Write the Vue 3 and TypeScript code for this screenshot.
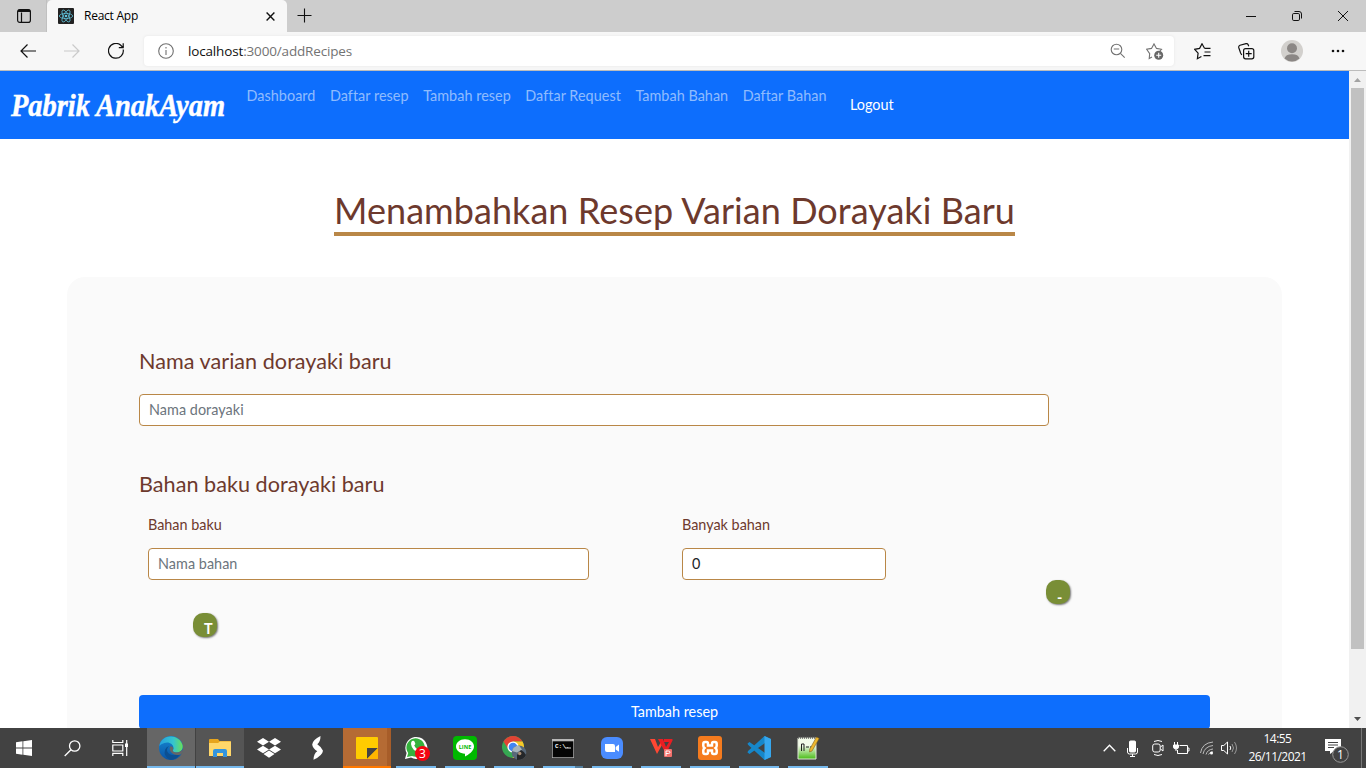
<script setup lang="ts">
import { ref } from 'vue'

const navLinks: string[] = ['Dashboard', 'Daftar resep', 'Tambah resep', 'Daftar Request', 'Tambah Bahan', 'Daftar Bahan']
const recipeName = ref('')
const ingredientName = ref('')
const amount = ref('0')
</script>

<template>
  <div class="screen">
    <header class="tabs">
      <div class="tab-actions">
        <svg width="16" height="16" viewBox="0 0 16 16" fill="none" stroke="#111" stroke-width="1.2">
          <rect x="1.6" y="1.6" width="12.8" height="12.8" rx="2.2" /><path d="M2 3.2h12M5.5 4.5v9.7" /><path d="M2 2.8h12" stroke-width="2.2" />
        </svg>
      </div>
      <div class="tab">
        <svg class="favicon" width="16" height="16" viewBox="0 0 16 16">
          <rect width="16" height="16" rx="1" fill="#222" />
          <g fill="none" stroke="#61c5de" stroke-width=".75"><ellipse cx="8" cy="8" rx="6.7" ry="2.6" /><ellipse cx="8" cy="8" rx="6.7" ry="2.6" transform="rotate(60 8 8)" /><ellipse cx="8" cy="8" rx="6.7" ry="2.6" transform="rotate(120 8 8)" /></g>
          <circle cx="8" cy="8" r="1.3" fill="#61c5de" />
        </svg>
        <span class="tab-title">React App</span>
        <svg width="9" height="9" viewBox="0 0 9 9" stroke="#111" stroke-width="1.4"><path d="M.6.6l7.8 7.8M8.400.6L.6 8.400" /></svg>
      </div>
      <svg class="new-tab" width="15" height="15" viewBox="0 0 15 15" stroke="#111" stroke-width="1.1"><path d="M7.500.5v14M.5 7.500h14" /></svg>
      <div class="window-controls">
        <svg width="10" height="10" viewBox="0 0 10 10" stroke="#111"><path d="M0 5.500h10" /></svg>
        <svg width="10" height="10" viewBox="0 0 10 10" fill="none" stroke="#111"><rect x=".5" y="2.500" width="7" height="7" rx="1.300" /><path d="M2.500.5h4.500a2.500 2.500 0 0 1 2.500 2.500v4.500" /></svg>
        <svg width="10" height="10" viewBox="0 0 10 10" stroke="#111"><path d="M0 0l10 10M10 0L0 10" /></svg>
      </div>
    </header>

    <div class="toolbar">
      <svg width="16" height="14" viewBox="0 0 16 14" fill="none" stroke="#111" stroke-width="1.200"><path d="M16 7H1M7.500.5L1 7l6.500 6.500" /></svg>
      <svg class="forward" width="16" height="14" viewBox="0 0 16 14" fill="none" stroke="#cacaca" stroke-width="1.200"><path d="M0 7h15M8.500.5L15 7l-6.500 6.500" /></svg>
      <svg class="reload" width="16" height="16" viewBox="0 0 16 16" fill="none" stroke="#111" stroke-width="1.200"><path d="M15.200 6.500A7.400 7.400 0 1 1 12.500 2L15 4.500M15.200.3v4.400h-4.400" /></svg>
      <div class="address">
        <svg width="16" height="16" viewBox="0 0 16 16" fill="none" stroke="#707070" stroke-width="1.100"><circle cx="8" cy="8" r="7.300" /><path d="M8 7v5M8 4v1.500" /></svg>
        <span class="url">localhost<span class="url-path">:3000/addRecipes</span></span>
        <svg class="zoom" width="16" height="16" viewBox="0 0 16 16" fill="none" stroke="#737373" stroke-width="1.100"><circle cx="6.500" cy="6.500" r="5.300" /><path d="M10.400 10.400l4.300 4.300M3.800 6h5.400" /></svg>
        <svg width="18" height="17" viewBox="0 0 18 17" fill="none" stroke="#737373" stroke-width="1.100"><path d="M6 14l-2.800 1.600.5-5L.7 6.300l4.800-.9L8 .9l2.500 4.500 5 .9-2 2.200" /><circle cx="12.700" cy="12.300" r="4.500" fill="#686868" stroke="none" /><path d="M12.700 9.800v5M10.200 12.300h5" stroke="#fff" /></svg>
      </div>
      <svg class="favorites" width="17" height="17" viewBox="0 0 17 17" fill="none" stroke="#111" stroke-width="1.200"><path d="M10.500 5.300L8 .8 5.600 5.400l-4.900.9 3.400 3.900-.7 5.500 4-2.200M10.500 5.300h6M10.500 9h6M9.500 12.600h7" /></svg>
      <svg class="collections" width="17" height="17" viewBox="0 0 17 17" fill="none" stroke="#111" stroke-width="1.200"><path d="M3.800 12L2.600 10 .8 4.700Q.3 3 2 2.200l6-1.600Q9.500.3 10.200 1.700l.5 1.600" /><rect x="5.600" y="5.600" width="10.200" height="10.200" rx="2" /><path d="M10.700 7.700v6M7.700 10.700h6" /></svg>
      <svg class="avatar" width="22" height="22" viewBox="0 0 22 22"><circle cx="11" cy="11" r="11" fill="#d2d0cd" /><circle cx="11" cy="8.300" r="5" fill="#8b8785" /><path d="M3.500 18.500q1-4.300 7.500-4.300t7.500 4.300A11 11 0 0 1 3.500 18.500" fill="#8b8785" /></svg>
      <svg width="14" height="4" viewBox="0 0 14 4" fill="#111"><circle cx="2" cy="2" r="1.300" /><circle cx="7" cy="2" r="1.300" /><circle cx="12" cy="2" r="1.300" /></svg>
    </div>

    <div class="viewport">
      <div class="page">
        <nav class="navbar">
          <svg class="brand" width="220" height="44" viewBox="0 0 220 44"><text x="2" y="32" textLength="214" lengthAdjust="spacingAndGlyphs">Pabrik AnakAyam</text></svg>
          <a v-for="link in navLinks" :key="link" class="nav-link">{{ link }}</a>
          <button class="logout">Logout</button>
        </nav>
        <h1><span>Menambahkan Resep Varian Dorayaki Baru</span></h1>
        <form class="card" @submit.prevent>
          <h4>Nama varian dorayaki baru</h4>
          <input v-model="recipeName" class="name-input" placeholder="Nama dorayaki" />
          <h4 class="second">Bahan baku dorayaki baru</h4>
          <div class="row">
            <label class="ingredient">Bahan baku<input v-model="ingredientName" placeholder="Nama bahan" /></label>
            <label class="amount">Banyak bahan<input v-model="amount" /></label>
            <button type="button" class="round remove">-</button>
          </div>
          <button type="button" class="round add">T</button>
          <button class="submit">Tambah resep</button>
        </form>
      </div>
      <div class="scrollbar">
        <svg width="17" height="17" viewBox="0 0 17 17"><path d="M5 11l3.500-4 3.500 4z" fill="#a3a3a3" /></svg>
        <div class="thumb"></div>
        <svg width="17" height="17" viewBox="0 0 17 17"><path d="M5 6l3.500 4L12 6z" fill="#505050" /></svg>
      </div>
    </div>

    <footer class="taskbar">
      <div class="sys"><svg width="16" height="16" viewBox="0 0 16 16" fill="#fff"><path d="M0 2.200L6.500 1.300v6.300H0zM7.300 1.200L16 0v7.600H7.300zM0 8.400h6.500v6.300L0 13.800zM7.300 8.400H16V16l-8.700-1.200z" /></svg></div>
      <div class="sys"><svg width="17" height="17" viewBox="0 0 17 17" fill="none" stroke="#fff" stroke-width="1.300"><circle cx="10.700" cy="6" r="5.200" /><path d="M7 9.700L.7 16" /></svg></div>
      <div class="sys"><svg width="17" height="16" viewBox="0 0 17 16" fill="none" stroke="#fff" stroke-width="1.200"><path d="M.8 0v2.500h10V0M.8 16v-2.700h10V16M.8 5h10v6h-10zM14.700 0v16" /><path d="M13 3.500h3v3.500h-3z" fill="#fff" stroke="none" /></svg></div>
      <div class="app edge"><svg width="24" height="24" viewBox="0 0 24 24">
        <defs><linearGradient id="edgeTop" x1="0" x2="1"><stop offset="0" stop-color="#269fdf" /><stop offset=".6" stop-color="#35c5ce" /><stop offset="1" stop-color="#69df58" /></linearGradient><linearGradient id="edgeSide" x2="0" y2="1"><stop stop-color="#1689d4" /><stop offset="1" stop-color="#0a53a4" /></linearGradient></defs>
        <circle cx="12" cy="12" r="12" fill="url(#edgeSide)" />
        <path d="M.3 10C2-2.200 20-3 23.500 9c1.200 5-3 8-7.200 7.500-3-.3-3.300-1.700-2-3.200 1.300-4.600-4.300-8.300-9-6.200Q2 8 .3 10" fill="url(#edgeTop)" />
        <path d="M10 10c-5 5 0 12 11 8Q17 24 11 23.800 4 20 6 14q1-3 4-4" fill="#0c4f91" />
        <path d="M14.200 13.400c-1.300 2 .7 3.200 3.500 3 2.700-.2 4.500-1.200 5.600-3 1.500 2-.5 4.600-1.800 5-7 2.500-13-3.500-10-8.200q3 0 2.700 3.200" fill="#666" />
      </svg></div>
      <div class="app explorer"><svg width="22" height="19" viewBox="0 0 22 19"><path d="M0 1q0-1 1-1h8l1.500 2H21q1 0 1 1v14H0z" fill="#e7a51d" /><path d="M0 4h9l2-1.500h11V17H0z" fill="#ffd76a" /><path d="M4 18v-6q0-2 2-2h10q2 0 2 2v6h-4v-4H8v4z" fill="#3294de" /></svg></div>
      <div class="app"><svg width="24" height="20" viewBox="0 0 24 20" fill="#fff"><path d="M6 0l6 3.800-6 3.800-6-3.800zM18 0l6 3.800-6 3.800-6-3.800zM6 7.700l6 3.800-6 3.800-6-3.800zM18 7.700l6 3.800-6 3.800-6-3.800zM12 12.500l5.500 3.600-5.500 3.600-5.500-3.600z" /></svg></div>
      <div class="app slash"><svg width="13" height="24" viewBox="0 0 13 24" fill="#fff"><path d="M9.500 0Q1.500 4 1.200 8.500 1.500 12 6.300 15.300 2.700 17.500 2.500 23.800 11.500 19.500 12 14.700 11 11.500 6.300 8.300 9.500 5.500 9.500 0" /></svg></div>
      <div class="app sticky"><svg width="22" height="22" viewBox="0 0 22 22"><rect width="22" height="22" rx="1" fill="#fc0" /><path d="M11 11h11L11 22z" fill="#444" /><path d="M11 22L22 11v10q0 1-1 1z" fill="#ffb500" /></svg></div>
      <div class="app running"><svg class="whatsapp" width="26" height="26" viewBox="0 0 26 26"><path d="M1 24l1.600-6A11 11 0 1 1 7 22.500z" fill="#fff" /><path d="M3 22l1.200-4A9.200 9.200 0 1 1 8 21z" fill="#35b23d" /><path d="M8 6q2-1 2.700 1l.7 2-1.200 1.500q1.300 3 4 4l1.400-1.300 3 1.300q-.5 3-3.200 2.700Q8 16 7 9q0-2 1-3" fill="#fff" /><circle cx="18.500" cy="18.500" r="7.500" fill="#f40612" /><text x="18.500" y="22.800" text-anchor="middle" class="badge-text">3</text></svg></div>
      <div class="app running"><svg width="24" height="24" viewBox="0 0 24 24"><rect width="24" height="24" rx="4" fill="#00b900" /><path d="M12 3.200c5.500 0 9 3.300 9 7.300 0 4.500-5.700 8.500-9 10v-2.700c-5-.3-9-3.300-9-7.300s3.700-7.300 9-7.300" fill="#fff" /><text x="12" y="13" text-anchor="middle" class="line-text">LINE</text></svg></div>
      <div class="app running"><svg width="26" height="26" viewBox="0 0 26 26"><circle cx="12" cy="12" r="11" fill="#36a852" /><path d="M2.500 6.500A11 11 0 0 1 21.500 6.500H12l-4.500 8z" fill="#e24334" /><path d="M12 6.500h9.500A11 11 0 0 1 11.500 23L17 14z" fill="#f9c828" /><circle cx="12" cy="12" r="5.600" fill="#fff" /><circle cx="12" cy="12" r="4.300" fill="#4285f4" /><circle cx="18" cy="17.700" r="7.300" fill="#586879" /><path d="M11 16q1-5 7-5.500l3 4-5 3z" fill="#a6b4bc" /><path d="M16 25v-5l4-5q4 2 5 5-2 5-9 5" fill="#242629" /><circle cx="18.700" cy="18.500" r="1.700" fill="#a88c73" /></svg></div>
      <div class="app running cmd"><svg width="22" height="19" viewBox="0 0 22 19"><rect width="22" height="19" fill="#b8b8b8" /><rect x=".7" y="2.300" width="20.600" height="16" fill="#050505" /><text x="3" y="9" class="cmd-text">C:\.</text><path d="M13 9h6" stroke="#ddd" /></svg></div>
      <div class="app running"><svg width="22" height="22" viewBox="0 0 22 22"><rect width="22" height="22" rx="6" fill="#4a8cff" /><path d="M4 7h8q2 0 2 2v6H6q-2 0-2-2zM14.700 10l3.300-2.500v7.200L14.700 12.500z" fill="#fff" /></svg></div>
      <div class="app running"><svg width="23" height="20" viewBox="0 0 23 20"><path d="M0 1h5l3 8 3-5 1 3-5 9z" fill="#ff4733" /><path d="M8 1h5l3 8 3-5h-5V1h8q1 0 .5 1.500L16 16z" fill="#e91d22" /><rect x="14" y="11" width="8" height="8" rx="1" fill="#f3716c" /><path d="M16 18v-5h2.500q1.500 0 1.500 1.200t-1.500 1.300H16" fill="none" stroke="#fff" /></svg></div>
      <div class="app running"><svg width="24" height="24" viewBox="0 0 24 24"><rect width="24" height="24" rx="3" fill="#f57b1e" /><path d="M7 6h1.500q1.500 0 1.500 2v1.500h4V8q0-2 1.500-2H17q1.700 0 1.700 1.700v2q0 1.300-1.200 2.300 1.200 1 1.200 2.300v2Q18.700 18 17 18h-1.500q-1.500 0-1.500-2v-1.500h-4V16q0 2-1.500 2H7q-1.700 0-1.700-1.700v-2q0-1.300 1.200-2.300-1.200-1-1.200-2.300v-2Q5.300 6 7 6" fill="none" stroke="#fff" stroke-width="2.500" /></svg></div>
      <div class="app running"><svg width="24" height="24" viewBox="0 0 24 24"><path d="M17.500 0L24 3v18l-6.500 3L1 8.800l-.5-1.300L2.500 6l15.500 11V7L2.500 18l-2-1.500L1 15z" fill="#1687ca" /><path d="M17.500 0L24 3v18l-6.500 3z" fill="#36a7ee" /></svg></div>
      <div class="app running"><svg width="24" height="24" viewBox="0 0 24 24"><defs><linearGradient id="notes" x2="0" y2="1"><stop offset=".35" stop-color="#f2fae9" /><stop offset="1" stop-color="#48bc16" /></linearGradient></defs><path d="M2 2h18v21H2z" fill="url(#notes)" stroke="#dfe6d7" /><path d="M2 1.700h18" stroke="#666" stroke-dasharray="1 1" stroke-width="2" /><path d="M5.500 8v7M5.500 8h2.500v7M10 11h3M14 11h3" stroke="#202020" fill="none" /><path d="M20.500 1l2.700 1.500L16 15l-2.500 1 .3-3z" fill="#edb72e" stroke="#806019" stroke-width=".6" /></svg></div>
      <div class="tray">
        <svg width="13" height="8" viewBox="0 0 13 8" fill="none" stroke="#fff" stroke-width="1.300"><path d="M.7 7.300l5.800-6 5.800 6" /></svg>
        <svg class="mic" width="11" height="17" viewBox="0 0 11 17" fill="none" stroke="#fff"><rect x="2.500" y="1" width="6" height="11" rx="1" fill="#fff" /><path d="M.5 8v4q0 2 2 2h6q2 0 2-2V8M5.500 14v2.500M3 16.500h5" /></svg>
        <svg class="cam" width="12" height="16" viewBox="0 0 12 16" fill="none" stroke="#fff"><rect x=".7" y="4" width="7.500" height="8" rx="2" /><path d="M8.500 7l2.500-2v6L8.500 9M2 1.500q4-2 8 0M2 14.500q4 2 8 0" /></svg>
        <svg class="battery" width="17" height="13" viewBox="0 0 17 13" fill="none" stroke="#fff"><path d="M6.500 3.500h8v8h-10V8M14.500 6h1.500v3h-1.500M1.500 0v3M4.500 0v3M3 7v2" /><path d="M.5 3h5v2q0 2-2.500 2T.5 5z" fill="#fff" /></svg>
        <svg class="wifi" width="14" height="14" viewBox="0 0 14 14" fill="none" stroke="#bbb"><path d="M.5 12Q2 2 13 1M3 13Q4.500 5.500 13 4.500M6 13.500Q7.500 8.500 13 8M8.500 13.500Q9.500 11 13 10.800" /><circle cx="11.500" cy="12" r="1.500" fill="#fff" stroke="none" /></svg>
        <svg class="speaker" width="17" height="14" viewBox="0 0 17 14" fill="none" stroke="#fff"><path d="M.5 4.500h2.300L6.500 1v12L2.800 9.500H.5zM9 5q1.500 2 0 4" /><path d="M11 3q3 4 0 8M13.500 1q4 6 0 12" stroke="#999" /></svg>
        <div class="clock"><span class="time">14:55</span><span class="date">26/11/2021</span></div>
        <svg class="notice" width="25" height="26" viewBox="0 0 25 26"><path d="M0 1h16v12H9l-4 3v-3H0z" fill="#fff" /><path d="M3 4.500h10M3 7h10M3 9.500h6" stroke="#444" /><circle cx="15.500" cy="16.500" r="7.800" fill="#414141" stroke="#999" /><text x="15.500" y="21" text-anchor="middle" class="notice-text">1</text></svg>
      </div>
    </footer>
  </div>
</template>

<style>
body { margin: 0; overflow: hidden; }
</style>
<style scoped>
* { box-sizing: border-box; }
svg { display: block; flex: none; }
.screen { width: 1366px; height: 768px; display: flex; flex-direction: column; overflow: hidden; background: #fff; font-family: Lato, sans-serif; }
.tabs { height: 32px; display: flex; background: #cdcdcd; flex: none; }
.tab-actions { width: 47px; padding: 8px 0 0 16px; border-right: 1px solid #c0c0c0; }
.tab { width: 240px; display: flex; align-items: center; padding: 0 12px 0 11px; background: #f7f7f7; border-radius: 5px 5px 0 0; }
.tab-title { flex: 1; margin-left: 10px; font: 12px/16px "Open Sans", sans-serif; letter-spacing: -.25px; }
.new-tab { margin: 8px 0 0 10px; }
.window-controls { margin: 11px 18px 0 auto; display: flex; gap: 36px; }
.toolbar { height: 39px; display: flex; align-items: center; padding: 0 21px 0 20px; background: #f7f7f7; border-bottom: 1px solid #bcbcbc; flex: none; }
.forward { margin-left: 28px; }
.reload { margin-left: 28px; }
.address { display: flex; align-items: center; width: 1030px; height: 30px; margin-left: 20px; padding: 0 10px 0 14px; border-radius: 4px; background: #fff; box-shadow: 0 0 3px #e5e5e5; }
.url { margin-left: 14px; font: 13.500px/18px "Open Sans", sans-serif; letter-spacing: -.16px; color: #111; }
.url-path { color: #737373; }
.zoom { margin: 0 20px 0 auto; }
.favorites { margin-left: 20px; }
.collections { margin-left: 27px; }
.avatar { margin: 0 28px 0 26px; }
.viewport { display: flex; height: 657px; flex: none; overflow: hidden; }
.page { width: 1349px; height: 657px; overflow: hidden; }
.navbar { height: 68px; display: flex; background: #0d6efd; }
.brand { margin: 13px 12px 0 9px; overflow: visible; }
.brand text { font: italic bold 32px "Liberation Serif", serif; fill: #fff; stroke: #fff; stroke-width: .5px; }
.nav-link { margin: 15px 9px 0 5.500px; font-size: 14.400px; line-height: 20px; letter-spacing: .04px; color: rgba(255,255,255,.55); white-space: nowrap; }
.logout { margin: 24px 0 0 14.500px; padding: 0; height: 20px; border: 0; background: none; color: #fff; font: 14.400px/20px Lato, sans-serif; }
h1 { margin: 50px 0 0; height: 47px; text-align: center; font-weight: 400; font-size: 36px; line-height: 42px; letter-spacing: .055px; color: #6d392d; }
h1 span { display: inline-block; height: 47px; border-bottom: 4px solid #b98747; white-space: nowrap; }
.card { width: 1215px; height: 560px; margin: 41px 0 0 67px; padding: 70px 72px 0; border-radius: 18px; background: #fafafa; color: #6d392d; }
h4 { margin: 0; height: 28px; font-size: 21.600px; line-height: 28px; font-weight: 400; letter-spacing: .03px; }
.second { margin-top: 44px; }
input { display: block; width: 100%; height: 32px; padding: 0 9px 2px; border: 1px solid #b98747; border-radius: 4px; background: #fff; color: #212529; font: 14.400px Lato, sans-serif; letter-spacing: .04px; outline: 0; }
input::placeholder { color: #6c757d; opacity: 1; }
.name-input { width: 910px; margin-top: 19px; }
.row { display: flex; height: 82px; padding: 17px 0 0 9px; }
label { font-size: 14.400px; line-height: 20px; }
label input { margin-top: 13px; }
.ingredient { width: 441px; }
.amount { width: 204px; margin-left: 93px; }
.round { display: block; width: 24px; height: 24px; border: 0; border-radius: 10px; background: #798e36; color: #fff; box-shadow: 1px 1px 2px #777; font: bold 14.400px/16px Lato, sans-serif; padding: 8px 0 0 11px; text-align: left; }
.remove { margin: 65px 0 0 160px; padding-top: 12px; line-height: 12px; flex: none; }
.add { margin: 33px 0 0 54px; }
.submit { display: block; width: 1071px; height: 34px; margin-top: 58px; padding: 0; border: 0; border-radius: 4px; background: #0d6efd; color: #fff; font: 14.400px/20px Lato, sans-serif; }
.scrollbar { width: 17px; height: 657px; background: #f1f1f1; }
.thumb { width: 13px; height: 561px; margin: 0 0 62px 2px; background: #c1c1c1; }
.taskbar { height: 40px; display: flex; background: #424242; flex: none; }
.sys { width: 48px; display: flex; align-items: center; justify-content: center; }
.sys:nth-child(3) { width: 51px; padding-right: 3px; }
.app { width: 48px; height: 40px; margin-right: 1px; display: flex; align-items: center; justify-content: center; flex: none; }
.edge, .explorer { background: #555; border-bottom: 2px solid #76b9ed; padding-top: 2px; }
.edge { background: #666; }
.slash { padding-right: 2px; }
.sticky { background: #b56b34; border-bottom: 2px solid #ff7800; padding-top: 2px; box-shadow: inset -4px 0 #a75d29; }
.running { background: linear-gradient(#76b9ed,#76b9ed) 4px 38px / 40px 2px no-repeat; }
.cmd { background: linear-gradient(90deg,#76b9ed 32px,#547f9e 32px) 4px 38px / 40px 2px no-repeat; }
.whatsapp { margin-left: 1px; }
.badge-text { font: 12px "Open Sans", sans-serif; fill: #fff; }
.line-text { font: bold 5.500px "Open Sans", sans-serif; fill: #00b900; }
.cmd-text { font: bold 6px "Liberation Mono", monospace; fill: #fff; }
.tray { display: flex; align-items: center; margin-left: auto; padding-right: 11px; border-right: 1px solid #777; margin-right: 4px; }
.mic { margin-left: 11px; }
.cam { margin-left: 14px; }
.battery { margin-left: 9px; }
.wifi { margin-left: 10px; }
.speaker { margin-left: 7px; }
.clock { width: 59px; margin-left: 10px; display: flex; flex-direction: column; align-items: center; color: #fff; font: 12px/18px "Open Sans", sans-serif; white-space: nowrap; }
.time, .date { letter-spacing: -.55px; }
.notice { margin: 6px 0 0 18px; }
.notice-text { font: 12px "Open Sans", sans-serif; fill: #fff; }
</style>
